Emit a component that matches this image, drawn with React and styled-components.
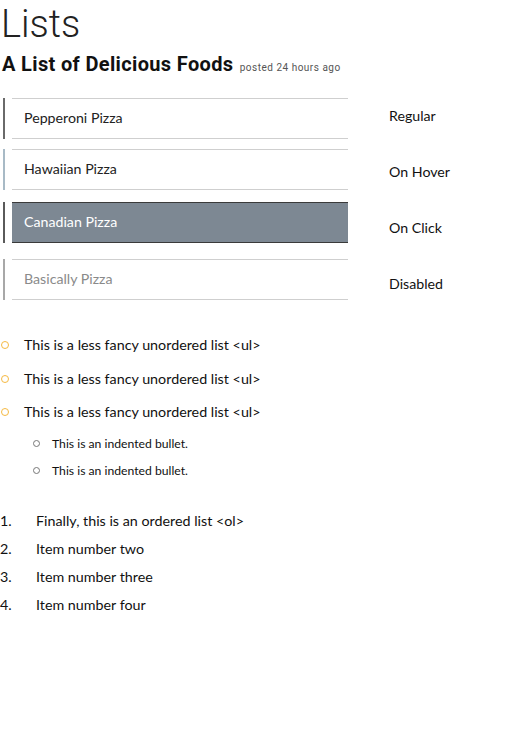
import React from 'react';
import styled, { createGlobalStyle } from 'styled-components';

const GlobalStyle = createGlobalStyle`
  body {
    margin: 0;
    background: #fff;
    font-family: Lato, "Noto Sans", sans-serif;
    color: #111;
  }
`;

const Page = styled.div`
  padding: 0 0 40px 0;
`;

const Title = styled.h1`
  font-family: Roboto, sans-serif;
  font-weight: 300;
  font-size: 38px;
  line-height: 48px;
  margin: 0 0 0 1px;
  color: #222;
`;

const Subtitle = styled.h2`
  font-family: Roboto, sans-serif;
  font-weight: 700;
  font-size: 20px;
  line-height: 24px;
  margin: 4px 0 0 2px;
  color: #111;
  letter-spacing: 0.35px;
  small {
    font-weight: 400;
    font-size: 10px;
    letter-spacing: 0.5px;
    color: #555;
    margin-left: 1px;
  }
`;

const States = styled.div`
  display: grid;
  grid-template-columns: 348px auto;
  column-gap: 41px;
  margin-top: 18px;
`;

const Items = styled.div`
  display: flex;
  flex-direction: column;
  padding-left: 3px;
`;

const colors = {
  regular: { bar: '#6a6a6a', bg: '#fff', text: '#222', line: '#cfcfcf' },
  hover: { bar: '#a8bac6', bg: '#fff', text: '#222', line: '#cfcfcf' },
  active: { bar: '#5a5a5a', bg: '#7d8893', text: '#fff', line: '#3a3a3a' },
  disabled: { bar: '#a8a8a8', bg: '#fff', text: '#8a8a8a', line: '#cfcfcf' },
};

const ItemRow = styled.div`
  display: flex;
  align-items: stretch;
  gap: 7px;
  margin-top: ${p => p.$gap}px;
`;

const Bar = styled.div`
  width: 2px;
  background: ${p => colors[p.$state].bar};
`;

const Item = styled.div`
  flex: 1;
  display: flex;
  align-items: center;
  padding: 0 0 2px 12px;
  box-sizing: border-box;
  height: 41px;
  font-size: 14.2px;
  background: ${p => colors[p.$state].bg};
  color: ${p => colors[p.$state].text};
  border-top: 1px solid ${p => colors[p.$state].line};
  border-bottom: 1px solid ${p => colors[p.$state].line};
`;

const Labels = styled.div`
  display: flex;
  flex-direction: column;
  margin-top: -10px;
`;

const Label = styled.div`
  font-size: 14.2px;
  line-height: 56px;
  color: #111;
`;

const Bullets = styled.ul`
  list-style: none;
  margin: 23px 0 0 0;
  padding: 0;
`;

const Bullet = styled.li`
  display: flex;
  align-items: center;
  font-size: 14.3px;
  line-height: 20px;
  margin-bottom: 13.5px;
  color: #111;
  &::before {
    content: '';
    width: 6px;
    height: 6px;
    border: 1.5px solid #f5b942;
    border-radius: 50%;
    margin: 0 15px 0 1px;
  }
`;

const SubBullets = styled.ul`
  list-style: none;
  margin: 0;
  padding: 0 0 0 32px;
`;

const SubBullet = styled.li`
  display: flex;
  align-items: center;
  font-size: 12.2px;
  line-height: 16px;
  margin-bottom: 11px;
  color: #111;
  &::before {
    content: '';
    width: 5px;
    height: 5px;
    border: 1px solid #777;
    border-radius: 50%;
    margin: 0 12px 0 1px;
  }
`;

const Ordered = styled.ol`
  list-style: none;
  margin: 32px 0 0 0;
  padding: 0;
  counter-reset: num;
`;

const OrderedItem = styled.li`
  counter-increment: num;
  display: flex;
  font-size: 14.3px;
  line-height: 20px;
  margin-bottom: 8px;
  color: #111;
  &::before {
    content: counter(num) '.';
    width: 36px;
  }
`;

const items = [
  { name: 'Pepperoni Pizza', state: 'regular', gap: 0 },
  { name: 'Hawaiian Pizza', state: 'hover', gap: 10 },
  { name: 'Canadian Pizza', state: 'active', gap: 12 },
  { name: 'Basically Pizza', state: 'disabled', gap: 16 },
];

export default function App() {
  return (
    <Page>
      <GlobalStyle />
      <Title>Lists</Title>
      <Subtitle>
        A List of Delicious Foods <small>posted 24 hours ago</small>
      </Subtitle>
      <States>
        <Items>
          {items.map(it => (
            <ItemRow key={it.name} $gap={it.gap}>
              <Bar $state={it.state} />
              <Item $state={it.state}>{it.name}</Item>
            </ItemRow>
          ))}
        </Items>
        <Labels>
          <Label>Regular</Label>
          <Label>On Hover</Label>
          <Label>On Click</Label>
          <Label>Disabled</Label>
        </Labels>
      </States>
      <Bullets>
        <Bullet>This is a less fancy unordered list &lt;ul&gt;</Bullet>
        <Bullet>This is a less fancy unordered list &lt;ul&gt;</Bullet>
        <Bullet>This is a less fancy unordered list &lt;ul&gt;</Bullet>
        <SubBullets>
          <SubBullet>This is an indented bullet.</SubBullet>
          <SubBullet>This is an indented bullet.</SubBullet>
        </SubBullets>
      </Bullets>
      <Ordered>
        <OrderedItem>Finally, this is an ordered list &lt;ol&gt;</OrderedItem>
        <OrderedItem>Item number two</OrderedItem>
        <OrderedItem>Item number three</OrderedItem>
        <OrderedItem>Item number four</OrderedItem>
      </Ordered>
    </Page>
  );
}
